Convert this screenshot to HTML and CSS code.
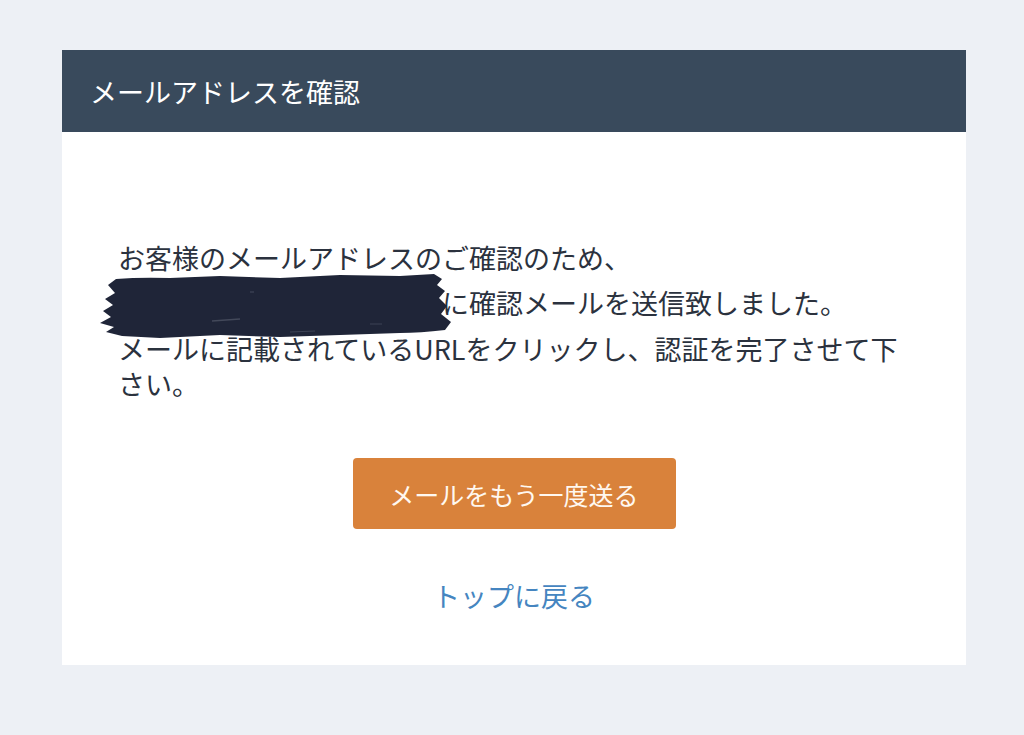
FILE: index.html
```html
<!DOCTYPE html>
<html lang="ja">
<head>
<meta charset="utf-8">
<title>メールアドレスを確認</title>
<link rel="stylesheet" href="styles.css">
</head>
<body>
<div class="card">
  <div class="card-header">メールアドレスを確認</div>
  <div class="card-body">
    <p class="msg msg-first">お客様のメールアドレスのご確認のため、<br><span class="redacted"><svg class="scribble" viewBox="0 0 352 66" width="352" height="66"><path d="M16,6 Q40,4 70,5 L120,3 L180,5 L240,2 L300,3 L334,1 L342,6 L337,12 L345,18 L339,25 L347,33 L341,41 L351,49 L345,57 Q320,60 300,60 L240,62 L180,64 L120,62 L60,65 L22,63 L6,59 L14,54 L0,50 L11,44 L3,38 L13,32 L5,26 L15,20 L8,12 Z" fill="#1f2538"/><path d="M112,48 L140,46" stroke="#5b6172" stroke-width="1.5" opacity="0.6"/><path d="M190,59 L215,58" stroke="#5b6172" stroke-width="1" opacity="0.5"/><path d="M270,51 L282,51" stroke="#5b6172" stroke-width="1" opacity="0.5"/><path d="M150,19 L154,19" stroke="#6b7182" stroke-width="1" opacity="0.5"/></svg></span>に確認メールを送信致しました。</p>
    <p class="msg msg-second">メールに記載されているURLをクリックし、認証を完了させて下さい。</p>
    <div class="actions">
      <a class="btn-resend" href="#">メールをもう一度送る</a>
      <a class="link-top" href="#">トップに戻る</a>
    </div>
  </div>
</div>
</body>
</html>
```
FILE: styles.css
```css
html, body {
  margin: 0;
  padding: 0;
}
body {
  background: #edf0f5;
  font-family: "Noto Sans CJK JP", "Noto Sans", sans-serif;
  height: 735px;
  overflow: hidden;
  padding-top: 50px;
  box-sizing: border-box;
}
.card {
  margin-left: 62px;
  width: 904px;
  background: #ffffff;
}
.card-header {
  height: 82px;
  background: #394a5c;
  color: #ffffff;
  font-size: 27px;
  display: flex;
  align-items: center;
  padding-left: 28px;
  box-sizing: border-box;
}
.card-body {
  padding: 103px 56px 51px 56px;
}
.msg {
  margin: 0;
  color: #2b323e;
  font-size: 27px;
}
.msg-first {
  line-height: 45px;
}
.msg-second {
  margin-top: 6px;
  line-height: 35px;
}
.redacted {
  display: inline-block;
  width: 324px;
  height: 20px;
  position: relative;
  vertical-align: middle;
}
.scribble {
  position: absolute;
  left: -18px;
  top: -24px;
  display: block;
}
.actions {
  display: flex;
  flex-direction: column;
  align-items: center;
  margin-top: 57px;
}
.btn-resend {
  width: 323px;
  height: 71px;
  background: #d9823b;
  border-radius: 4px;
  color: #fff8f0;
  font-size: 25px;
  text-decoration: none;
  display: flex;
  align-items: center;
  justify-content: center;
}
.link-top {
  margin-top: 49px;
  font-size: 27px;
  line-height: 36px;
  color: #4585c0;
  text-decoration: none;
}
```
